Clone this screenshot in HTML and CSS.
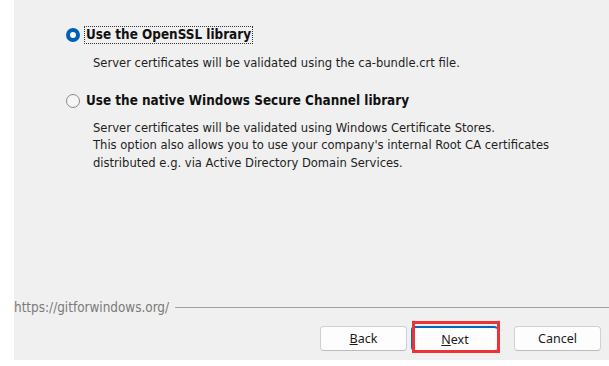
FILE: index.html
```html
<!DOCTYPE html>
<html>
<head>
<meta charset="utf-8">
<link rel="stylesheet" href="styles.css">
</head>
<body>
<div class="page">
  <div class="content">
    <div class="option">
      <span class="radio checked"></span>
      <span class="label focused">Use the OpenSSL library</span>
    </div>
    <div class="desc">Server certificates will be validated using the ca-bundle.crt file.</div>
    <div class="option second">
      <span class="radio"></span>
      <span class="label">Use the native Windows Secure Channel library</span>
    </div>
    <div class="desc second">Server certificates will be validated using Windows Certificate Stores.<br>This option also allows you to use your company's internal Root CA certificates<br>distributed e.g. via Active Directory Domain Services.</div>
  </div>
  <div class="sep">
    <span class="sep-text">https://gitforwindows.org/</span>
    <span class="sep-line"></span>
  </div>
  <div class="buttons">
    <button class="btn"><u>B</u>ack</button>
    <div class="next-wrap">
      <button class="btn default"><u>N</u>ext</button>
      <div class="highlight"></div>
    </div>
    <button class="btn cancel">Cancel</button>
  </div>
</div>
</body>
</html>
```
FILE: styles.css
```css
html, body {
  margin: 0;
  padding: 0;
  background: #ffffff;
}
.page {
  margin-left: 14px;
  height: 360px;
  background: #f0f0f0;
  display: flex;
  flex-direction: column;
  font-family: "DejaVu Sans Condensed", "DejaVu Sans", sans-serif;
  color: #1a1a1a;
}
.content {
  padding: 26px 0 0 51px;
  flex: 1;
}
.option {
  display: flex;
  align-items: center;
  height: 18px;
  gap: 4px;
}
.option.second {
  margin-top: 20px;
}
.radio {
  width: 14px;
  height: 14px;
  box-sizing: border-box;
  border-radius: 50%;
  border: 1px solid #8a8a8a;
  background: #f6f6f6;
  margin-left: 1px;
}
.radio.checked {
  border: 4px solid #005fb8;
  background: #ffffff;
}
.label {
  font-weight: bold;
  font-size: 13.4px;
  line-height: 16px;
  padding: 0 1px;
  border: 1px solid transparent;
  color: #111;
}
.label.focused {
  border: 1px dotted #333;
}
.desc {
  margin-top: 10px;
  padding-left: 28px;
  font-size: 12.85px;
  line-height: 17.5px;
  color: #1e1e1e;
}
.desc.second {
  margin-top: 9px;
}
.sep {
  display: flex;
  align-items: center;
  height: 14px;
  gap: 6px;
}
.sep-text {
  font-size: 13.4px;
  color: #7a7a7a;
}
.sep-line {
  flex: 1;
  height: 1px;
  background: #a0a0a0;
}
.buttons {
  display: flex;
  justify-content: flex-end;
  align-items: center;
  padding: 12px 8px 9px 0;
  gap: 4px;
}
.btn {
  width: 87px;
  height: 25px;
  box-sizing: border-box;
  border: 1px solid #d0d0d0;
  border-bottom-color: #bcbcbc;
  border-radius: 4px;
  background: #fdfdfd;
  font-family: "Noto Sans", "Open Sans", sans-serif;
  font-size: 12.5px;
  color: #1a1a1a;
  padding: 0;
}
.btn u {
  text-decoration-thickness: 1px;
}
.next-wrap {
  position: relative;
  display: flex;
}
.btn.default {
  border: 1px solid #c8c8c8;
  border-top: 2px solid #0067c0;
  border-left: 2px solid #0067c0;
}
.btn.cancel {
  margin-left: 12px;
}
.highlight {
  position: absolute;
  left: 1px;
  top: -5px;
  width: 88px;
  height: 32px;
  box-sizing: border-box;
  border: 3px solid #ee3338;
}
```
